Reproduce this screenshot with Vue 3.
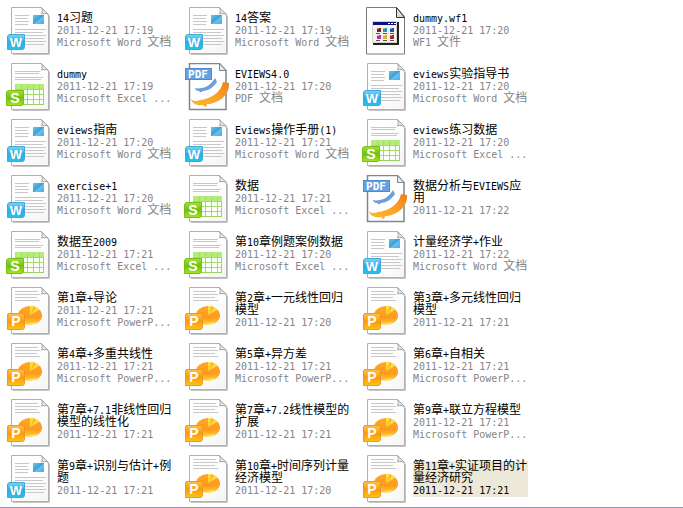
<template>
  <main class="folder">
    <!-- Shared icon shapes -->
    <svg class="icon-defs" width="0" height="0" aria-hidden="true">
      <defs>
        <linearGradient id="paper" x1="0" y1="0" x2="1" y2="1">
          <stop offset="0" stop-color="#ffffff" />
          <stop offset="0.6" stop-color="#fdfdfd" />
          <stop offset="1" stop-color="#f4f4f4" />
        </linearGradient>
        <linearGradient id="blue" x1="0" y1="0" x2="0" y2="1">
          <stop offset="0" stop-color="#7fd2f4" />
          <stop offset="0.5" stop-color="#2fa9e2" />
          <stop offset="1" stop-color="#22c4f2" />
        </linearGradient>
        <linearGradient id="photo" x1="0" y1="0" x2="1" y2="1">
          <stop offset="0" stop-color="#6fc3ee" />
          <stop offset="0.5" stop-color="#3b9ddb" />
          <stop offset="0.55" stop-color="#6bc0ec" />
          <stop offset="1" stop-color="#48aee4" />
        </linearGradient>
        <linearGradient id="green" x1="0" y1="0" x2="0" y2="1">
          <stop offset="0" stop-color="#a4e03a" />
          <stop offset="0.5" stop-color="#6fc010" />
          <stop offset="1" stop-color="#a8e612" />
        </linearGradient>
        <linearGradient id="orange" x1="0" y1="0" x2="0" y2="1">
          <stop offset="0" stop-color="#ffc04a" />
          <stop offset="0.5" stop-color="#f99a10" />
          <stop offset="1" stop-color="#ffc31a" />
        </linearGradient>
        <linearGradient id="pie" x1="0" y1="0" x2="0" y2="1">
          <stop offset="0" stop-color="#ffa826" />
          <stop offset="0.6" stop-color="#ff9a1c" />
          <stop offset="1" stop-color="#ffd23a" />
        </linearGradient>
        <linearGradient id="swoosh" x1="0" y1="1" x2="1" y2="0">
          <stop offset="0" stop-color="#ffb62e" />
          <stop offset="0.5" stop-color="#fba426" />
          <stop offset="1" stop-color="#ef7d1c" />
        </linearGradient>

        <symbol id="page" viewBox="0 0 48 48">
          <path d="M8 47.5H44.5V9" fill="none" stroke="#c4c4c4" />
          <path d="M6.5 0.5H36.5L43.5 7.5V46.5H6.5Z" fill="url(#paper)" stroke="#b0b0b0" />
          <path d="M36.5 0.5C37.5 3 37.5 5 36.5 7C39 6 41 6.5 43.5 7.5Z" fill="#e8e8e8" stroke="#a4a4a4" />
        </symbol>

        <symbol id="word" viewBox="0 0 48 48">
          <use href="#page" />
          <path
            d="M10 8.5H24M10 11.5H23M10 14.5H24M10 17.5H23M10 22.5H41M10 25.5H38M10 28.5H41M10 31.5H39M10 34.5H41M10 37.5H39"
            stroke="#c8c8c8"
          />
          <rect x="28" y="8" width="11" height="9" fill="url(#photo)" />
          <path d="M5 27.5H19.5V40Q19.5 42.5 17 42.5H2.5V30Q2.5 27.5 5 27.5Z" fill="url(#blue)" stroke="#3fa9da" />
          <text x="11" y="40" class="glyph">W</text>
        </symbol>

        <symbol id="excel" viewBox="0 0 48 48">
          <use href="#page" />
          <path d="M10 8.5H35M10 10.5H34M10 14.5H38M10 16.5H36" stroke="#c8c8c8" />
          <rect x="10.5" y="21.5" width="28" height="20" fill="#fbfff5" stroke="#9bd266" />
          <rect x="10" y="21" width="29" height="5" fill="#b4ed78" />
          <path
            d="M10 26.5H39M10 31.5H39M10 36.5H39M16.5 22V41M22.5 22V41M28.5 22V41M34.5 22V41"
            stroke="#a3d972"
            fill="none"
          />
          <path d="M4 27.5H18.5V40Q18.5 42.5 16 42.5H1.5V30Q1.5 27.5 4 27.5Z" fill="url(#green)" stroke="#78bd18" />
          <text x="10" y="40" class="glyph glyph-large">S</text>
        </symbol>

        <symbol id="powerpoint" viewBox="0 0 48 48">
          <use href="#page" />
          <path d="M10 4.5H33M10 7.5H35M10 10.5H32M10 13.5H35" stroke="#c8c8c8" />
          <ellipse cx="25" cy="28.5" rx="12" ry="9.5" fill="url(#pie)" />
          <path d="M25 28L25 19C30 19 33 21 34 23Z" fill="#ffd93d" />
          <path d="M25 28L29 19.5L31 20.5Z" fill="#ffac22" />
          <path d="M22 37Q27 38 33 35Q28 36 22 37Z" fill="#fff0a0" />
          <path d="M4 26.5H19.5V40Q19.5 42.5 17 42.5H2.5V28Q2.5 26.5 4 26.5Z" fill="url(#orange)" stroke="#ef9a1e" />
          <text x="11" y="39" class="glyph glyph-large">P</text>
        </symbol>

        <symbol id="pdf" viewBox="0 0 48 48">
          <path d="M6.5 0.5H36.5L43 7.5V46.5H6.5Z" fill="#ffffff" stroke="#7d8790" stroke-width="1.5" />
          <path d="M36.5 0.5V7.5H43Z" fill="#e8eaec" stroke="#7d8790" />
          <path
            d="M12 25C15 26 17 25 19 25C25 24 29 20 32 15L34 19C31 24 25 28 20 28C18 30 17 29 16 28C14 28 12 27 12 25Z"
            fill="#6c9fdc"
          />
          <path
            d="M8 36C11 39 14 38 17 37C27 36 38 30 40 19L46 20C47 33 34 41 24 41C24 44 22 45 20 42C14 43 9 41 8 36Z"
            fill="url(#swoosh)"
          />
          <rect x="2.5" y="5.5" width="26" height="11" fill="#67a1e0" stroke="#4f8acb" />
          <text x="15" y="15" class="glyph glyph-pdf">PDF</text>
        </symbol>

        <symbol id="program" viewBox="0 0 48 48">
          <path d="M5.5 0.5H35.5L43.5 9.5V47H5.5Z" fill="#ffffff" stroke="#7a7a7a" />
          <path d="M35.5 0.5V10.5H43.5Z" fill="#dddddd" stroke="#333333" />
          <rect x="12" y="15" width="26" height="23" fill="#222222" />
          <rect x="11" y="14" width="25" height="22" fill="#d8d4c8" />
          <rect x="12" y="18" width="23" height="17" fill="#f4f2ea" />
          <rect x="12" y="15" width="23" height="3" fill="#10107c" />
          <path d="M27 16.5H29M30 16.5H32M33 16.5H35" stroke="#ffffff" />
          <path d="M15 26.5H19M22 26.5H26M29 26.5H33M15 33.5H19M22 33.5H26M29 33.5H33" stroke="#555555" />
          <rect x="16" y="21" width="4" height="4" fill="#8c1c1c" />
          <rect x="22" y="21" width="4" height="4" fill="#1f9ab4" />
          <rect x="29" y="21" width="4" height="4" fill="#2450b8" />
          <rect x="16" y="28" width="4" height="4" fill="#c828a8" />
          <rect x="22" y="28" width="4" height="4" fill="#d8b820" />
          <rect x="29" y="28" width="4" height="4" fill="#b81c34" />
          <path d="M16 21.5H18M22 21.5H24M29 21.5H31M16 28.5H18M22 28.5H24M29 28.5H31" stroke="#ffffff" opacity="0.5" />
        </symbol>
      </defs>
    </svg>

    <ul class="files">
      <li v-for="file in files" :key="file.name" class="file">
        <svg class="icon" viewBox="0 0 48 48" aria-hidden="true">
          <use :href="'#' + file.icon" />
        </svg>
        <div class="details" :class="{ selected: file.selected }">
          <div v-for="(line, index) in linesOf(file)" :key="index" :class="index === 0 ? 'name' : 'meta'">
            <span v-for="(run, i) in runs(line)" :key="i" :class="{ latin: run.latin }">{{ run.text }}</span>
          </div>
        </div>
      </li>
    </ul>
  </main>
</template>

<script setup>
import { ref } from 'vue'

const WORD = 'Microsoft Word 文档'
const EXCEL = 'Microsoft Excel ...'
const POWERPOINT = 'Microsoft PowerP...'

const files = ref([
  { name: '14习题', time: '17:19', icon: 'word', type: WORD },
  { name: '14答案', time: '17:19', icon: 'word', type: WORD },
  { name: 'dummy.wf1', time: '17:20', icon: 'program', type: 'WF1 文件' },
  { name: 'dummy', time: '17:19', icon: 'excel', type: EXCEL },
  { name: 'EVIEWS4.0', time: '17:20', icon: 'pdf', type: 'PDF 文档' },
  { name: 'eviews实验指导书', time: '17:20', icon: 'word', type: WORD },
  { name: 'eviews指南', time: '17:20', icon: 'word', type: WORD },
  { name: 'Eviews操作手册(1)', time: '17:21', icon: 'word', type: WORD },
  { name: 'eviews练习数据', time: '17:20', icon: 'excel', type: EXCEL },
  { name: 'exercise+1', time: '17:20', icon: 'word', type: WORD },
  { name: '数据', time: '17:21', icon: 'excel', type: EXCEL },
  { name: '数据分析与EVIEWS应用', time: '17:22', icon: 'pdf' },
  { name: '数据至2009', time: '17:21', icon: 'excel', type: EXCEL },
  { name: '第10章例题案例数据', time: '17:20', icon: 'excel', type: EXCEL },
  { name: '计量经济学+作业', time: '17:22', icon: 'word', type: WORD },
  { name: '第1章+导论', time: '17:21', icon: 'powerpoint', type: POWERPOINT },
  { name: '第2章+一元线性回归模型', time: '17:20', icon: 'powerpoint' },
  { name: '第3章+多元线性回归模型', time: '17:21', icon: 'powerpoint' },
  { name: '第4章+多重共线性', time: '17:21', icon: 'powerpoint', type: POWERPOINT },
  { name: '第5章+异方差', time: '17:21', icon: 'powerpoint', type: POWERPOINT },
  { name: '第6章+自相关', time: '17:21', icon: 'powerpoint', type: POWERPOINT },
  { name: '第7章+7.1非线性回归模型的线性化', time: '17:21', icon: 'powerpoint' },
  { name: '第7章+7.2线性模型的扩展', time: '17:21', icon: 'powerpoint' },
  { name: '第9章+联立方程模型', time: '17:21', icon: 'powerpoint', type: POWERPOINT },
  { name: '第9章+识别与估计+例题', time: '17:21', icon: 'word' },
  { name: '第10章+时间序列计量经济模型', time: '17:20', icon: 'powerpoint' },
  { name: '第11章+实证项目的计量经济研究', time: '17:21', icon: 'powerpoint', selected: true },
])

const linesOf = (file) => {
  return [file.name, `2011-12-21 ${file.time}`, file.type].filter(Boolean)
}

// Latin characters are half as wide as Chinese ones, so they get their own font size
const runs = (text) => {
  return text.match(/[\x20-\x7e]+|[^\x20-\x7e]+/g).map((part) => ({
    text: part,
    latin: /^[\x20-\x7e]/.test(part),
  }))
}
</script>

<style>
body {
  margin: 0;
  background: #fff;
}
</style>

<style scoped>
.folder {
  padding-top: 3px;
  border-bottom: 1px solid #8b9aa6;
  font-family: "Liberation Mono", "Noto Sans CJK SC", monospace;
  font-size: 12px;
  line-height: 12px;
}

.icon-defs {
  position: absolute;
}

.files {
  display: grid;
  grid-template-columns: repeat(auto-fill, 178px);
  margin: 0;
  padding: 0 0 0 5px;
  list-style: none;
}

.file {
  display: flex;
  align-items: center;
  gap: 4px;
  padding: 4px 0;
}

.icon {
  flex: none;
  width: 48px;
  height: 48px;
}

.details {
  width: 115px;
}

.name,
.meta {
  word-break: break-all;
}

.name {
  color: #000;
}

.meta {
  color: #858585;
}

.latin {
  font-family: "DejaVu Sans Mono", monospace;
  font-size: 10px;
}

.selected {
  background: #ece9d8;
}

.selected .meta {
  color: #000;
}

.glyph {
  fill: #fff;
  font-family: "Liberation Sans", sans-serif;
  font-size: 13px;
  font-weight: bold;
  text-anchor: middle;
}

.glyph-large {
  font-size: 14px;
}

.glyph-pdf {
  font-family: "DejaVu Sans Mono", monospace;
  font-size: 11px;
}
</style>
